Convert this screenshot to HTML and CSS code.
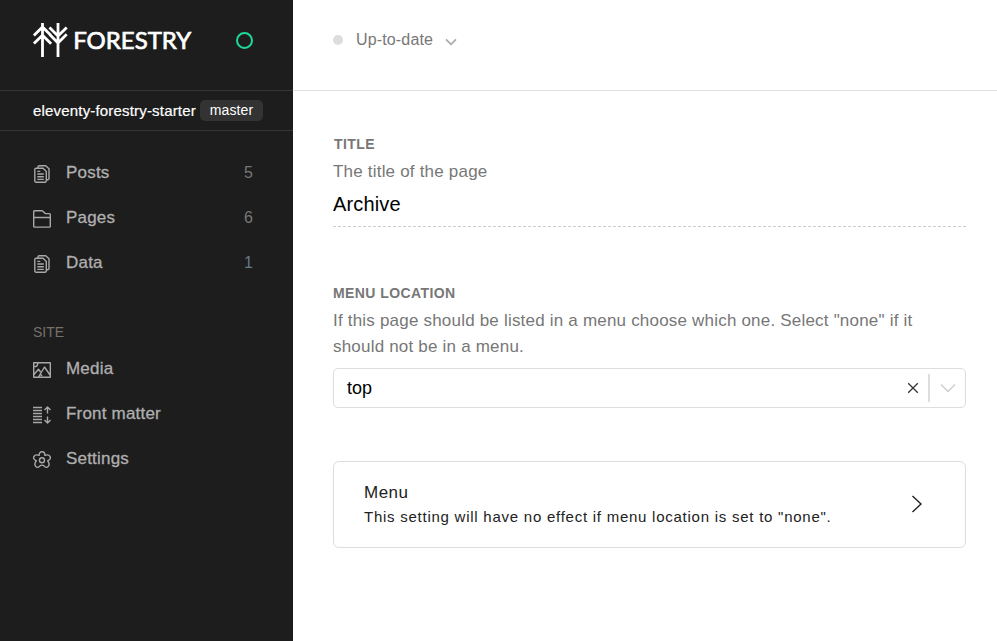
FILE: index.html
```html
<!DOCTYPE html>
<html lang="en">
<head>
<meta charset="utf-8">
<title>Forestry</title>
<link rel="stylesheet" href="styles.css">
</head>
<body>
<div class="app">
  <aside class="sidebar">
    <header class="brand">
      <svg class="logo" width="160" height="36" viewBox="0 0 160 36">
        <g fill="none" stroke="#fff" stroke-width="2.8">
          <path d="M9.500 1v34M25 1v34M.9 13.500 9.500 5l8.300 8.300M.9 21.500l8.600-8.300 8.600 8.600M16.500 5.500l8.500 8.600 8.700-8.600M16.500 12.300l8.500 8.600 8.700-8.600"/>
        </g>
        <text class="wordmark" x="40.200" y="26.500" textLength="118" lengthAdjust="spacingAndGlyphs">FORESTRY</text>
      </svg>
      <span class="status-ring"></span>
    </header>
    <div class="site"><span class="site-name">eleventy-forestry-starter</span><span class="branch">master</span></div>
    <nav class="nav">
      <a class="item"><svg class="icon" viewBox="0 0 18 18"><path d="M5 3.200V2A1.200 1.200 0 0 1 6.200.800h6.500l3.300 3v9.700a1.200 1.200 0 0 1-1.200 1.200h-1.500M1.800 4.500A1.200 1.200 0 0 1 3 3.300h7.100l3.200 3.200V16a1.200 1.200 0 0 1-1.200 1.200H3A1.200 1.200 0 0 1 1.800 16zM4.300 9h6.500M4.300 11.700h6.500M4.300 14.400h6.500M4.300 6.400h3"/></svg><span>Posts</span><b class="count">5</b></a>
      <a class="item"><svg class="icon" viewBox="0 0 18 18"><path d="M.7 16.300V1.500q0-.8.800-.8h7.700l3.300 2.900h4q.8 0 .8.800v11.900q0 .8-.8.800h-15q-.8 0-.8-.8zM.7 7.500h16.600"/></svg><span>Pages</span><b class="count">6</b></a>
      <a class="item"><svg class="icon" viewBox="0 0 18 18"><path d="M5 3.200V2A1.200 1.200 0 0 1 6.200.800h6.500l3.300 3v9.700a1.200 1.200 0 0 1-1.200 1.200h-1.500M1.800 4.500A1.200 1.200 0 0 1 3 3.300h7.100l3.200 3.200V16a1.200 1.200 0 0 1-1.200 1.200H3A1.200 1.200 0 0 1 1.800 16zM4.300 9h6.500M4.300 11.700h6.500M4.300 14.400h6.500M4.300 6.400h3"/></svg><span>Data</span><b class="count data">1</b></a>
      <h2 class="group">SITE</h2>
      <a class="item"><svg class="icon" viewBox="0 0 18 18"><path d="M.7 1.700h16.600v14.600H.7zM1 13.500l4.500-5.300 2 2.800M5.500 16l6-10 5.500 8M7.200 13l1.800 2M.8 5.500h2q2-.5 2-3.500"/></svg><span>Media</span></a>
      <a class="item"><svg class="icon" viewBox="0 0 18 18"><path d="M0 1.500h9M0 4.500h9M0 7.500h9M0 10.500h9M0 13.500h9M0 16.500h9M14.500 7.500V1M11.500 4l3-3 3 3M14.500 10.500V17M11.500 14l3 3 3-3"/></svg><span>Front matter</span></a>
      <a class="item"><svg class="icon" viewBox="0 0 18 18"><path d="M6.100 4.400C6.100 1.900 7.200.7 9 .7s2.900 1.200 2.900 3.700c2.300-.9 4.400-.5 5.200 1.200.8 1.800-.2 3.200-2.500 4.200 1.600 1.900 1.800 4.200.6 5.600-1.300 1.500-3.100 1.200-4.400-.7-.8-.8-2.800-.8-3.600 0-1.300 1.900-3.100 2.200-4.400.7-1.200-1.400-1-3.700.6-5.600C1.100 8.800.1 7.400.9 5.600c.8-1.700 2.900-2.100 5.200-1.200z"/><circle cx="9" cy="9.300" r="2.500"/></svg><span>Settings</span></a>
    </nav>
  </aside>
  <main class="main">
    <header class="topbar">
      <span class="dot"></span><span class="state">Up-to-date</span>
      <svg class="caret" width="12" height="8" viewBox="0 0 12 8"><path d="M1 1.300l5 5 5-5"/></svg>
    </header>
    <div class="form">
      <section class="field title-field">
        <h3 class="label title-label">TITLE</h3>
        <p class="help title-help">The title of the page</p>
        <div class="value">Archive</div>
      </section>
      <section class="field">
        <h3 class="label">MENU LOCATION</h3>
        <p class="help">If this page should be listed in a menu choose which one. Select "none" if it<br>should not be in a menu.</p>
        <div class="select"><span class="selected">top</span>
          <svg class="clear" width="12" height="12" viewBox="0 0 12 12"><path d="M1.200 1.200l9.600 9.600M10.800 1.200l-9.600 9.600"/></svg>
          <i class="divider"></i>
          <svg class="down" width="16" height="10" viewBox="0 0 16 10"><path d="M1 1.500l7 7 7-7"/></svg>
        </div>
      </section>
      <section class="card">
        <div><h4 class="card-title">Menu</h4><p class="card-text">This setting will have no effect if menu location is set to "none".</p></div>
        <svg class="next" width="12" height="18" viewBox="0 0 12 18"><path d="M1.500 1l8.500 8-8.500 8"/></svg>
      </section>
    </div>
  </main>
</div>
</body>
</html>
```
FILE: styles.css
```css
* { box-sizing: border-box; }
body { margin: 0; font-family: "Liberation Sans", Arial, sans-serif; }
h2, h3, h4, p { margin: 0; font-weight: normal; }
svg { display: block; flex: none; }
.app { display: flex; height: 641px; overflow: hidden; background: #fff; }
.sidebar { width: 293px; flex: none; background: #1d1d1d; }
.brand { display: flex; justify-content: space-between; height: 91px; padding: 22px 40px 0 33px; border-bottom: 1px solid #363636; }
.logo { overflow: visible; }
.wordmark { font: 400 23.8px Lato, sans-serif; fill: #fff; stroke: #fff; stroke-width: .7px; }
.status-ring { width: 17px; height: 17px; margin-top: 10px; border: 2px solid #1fd79b; border-radius: 50%; }
.site { display: flex; align-items: center; height: 40px; padding-left: 33px; border-bottom: 1px solid #363636; color: #fff; }
.site-name { width: 167px; font-size: 15px; letter-spacing: .18px; white-space: nowrap; -webkit-text-stroke: .2px #fff; }
.branch { width: 63px; height: 21px; border-radius: 5px; background: #333; font-size: 14px; letter-spacing: .15px; line-height: 20px; text-align: center; }
.nav { padding: 19px 40px 0 33px; }
.item { display: flex; align-items: center; height: 45px; color: #afafaf; font-size: 17px; letter-spacing: .2px; -webkit-text-stroke: .3px #afafaf; }
.icon { width: 18px; height: 18px; margin: 2px 15px 0 0; fill: none; stroke: #a8a8a8; stroke-width: 1.4; stroke-linejoin: round; }
.count { margin-left: auto; font-size: 16px; font-weight: normal; letter-spacing: 0; color: #777; -webkit-text-stroke: 0; }
.data { color: #68798a; }
.group { height: 61px; padding-top: 39px; color: #75706a; font-size: 14px; line-height: 16px; letter-spacing: 0; }
.main { flex: 1; }
.topbar { display: flex; align-items: center; height: 91px; padding: 0 0 11px 40px; border-bottom: 1px solid #e0e0e0; color: #777; }
.dot { width: 10px; height: 10px; margin-right: 13px; border-radius: 50%; background: #ddd; }
.state { width: 89px; font-size: 16px; letter-spacing: .15px; }
.caret { margin-top: 5px; fill: none; stroke: #aaa; stroke-width: 1.7; }
.form { padding: 44px 31px 0 40px; }
.title-field { height: 149px; }
.label { height: 24px; color: #777; font-size: 14px; font-weight: bold; line-height: 18px; letter-spacing: .42px; }
.title-label { padding-left: 1px; }
.help { color: #777; font-size: 17px; line-height: 26px; letter-spacing: .2px; white-space: nowrap; }
.value { height: 42px; border-bottom: 1px dashed #ccc; font-size: 20px; letter-spacing: .15px; line-height: 38px; }
.select { display: flex; align-items: center; height: 40px; margin-top: 8px; padding: 0 10px 0 13px; border: 1px solid #ddd; border-radius: 5px; font-size: 18px; }
.selected { flex: 1; }
.clear { fill: none; stroke: #333; stroke-width: 1.3; }
.divider { width: 2px; height: 28px; margin: 0 10px 0 9px; background: #ddd; }
.down { margin-right: -1px; fill: none; stroke: #ccc; stroke-width: 1.4; }
.card { display: flex; justify-content: space-between; height: 87px; margin-top: 53px; padding: 20px 42px 0 30px; border: 1px solid #ddd; border-radius: 6px; color: #222; }
.card-title { font-size: 17px; line-height: 22px; letter-spacing: .5px; }
.card-text { font-size: 15px; line-height: 26px; letter-spacing: .75px; }
.next { margin-top: 13px; fill: none; stroke: #222; stroke-width: 1.4; }
```
